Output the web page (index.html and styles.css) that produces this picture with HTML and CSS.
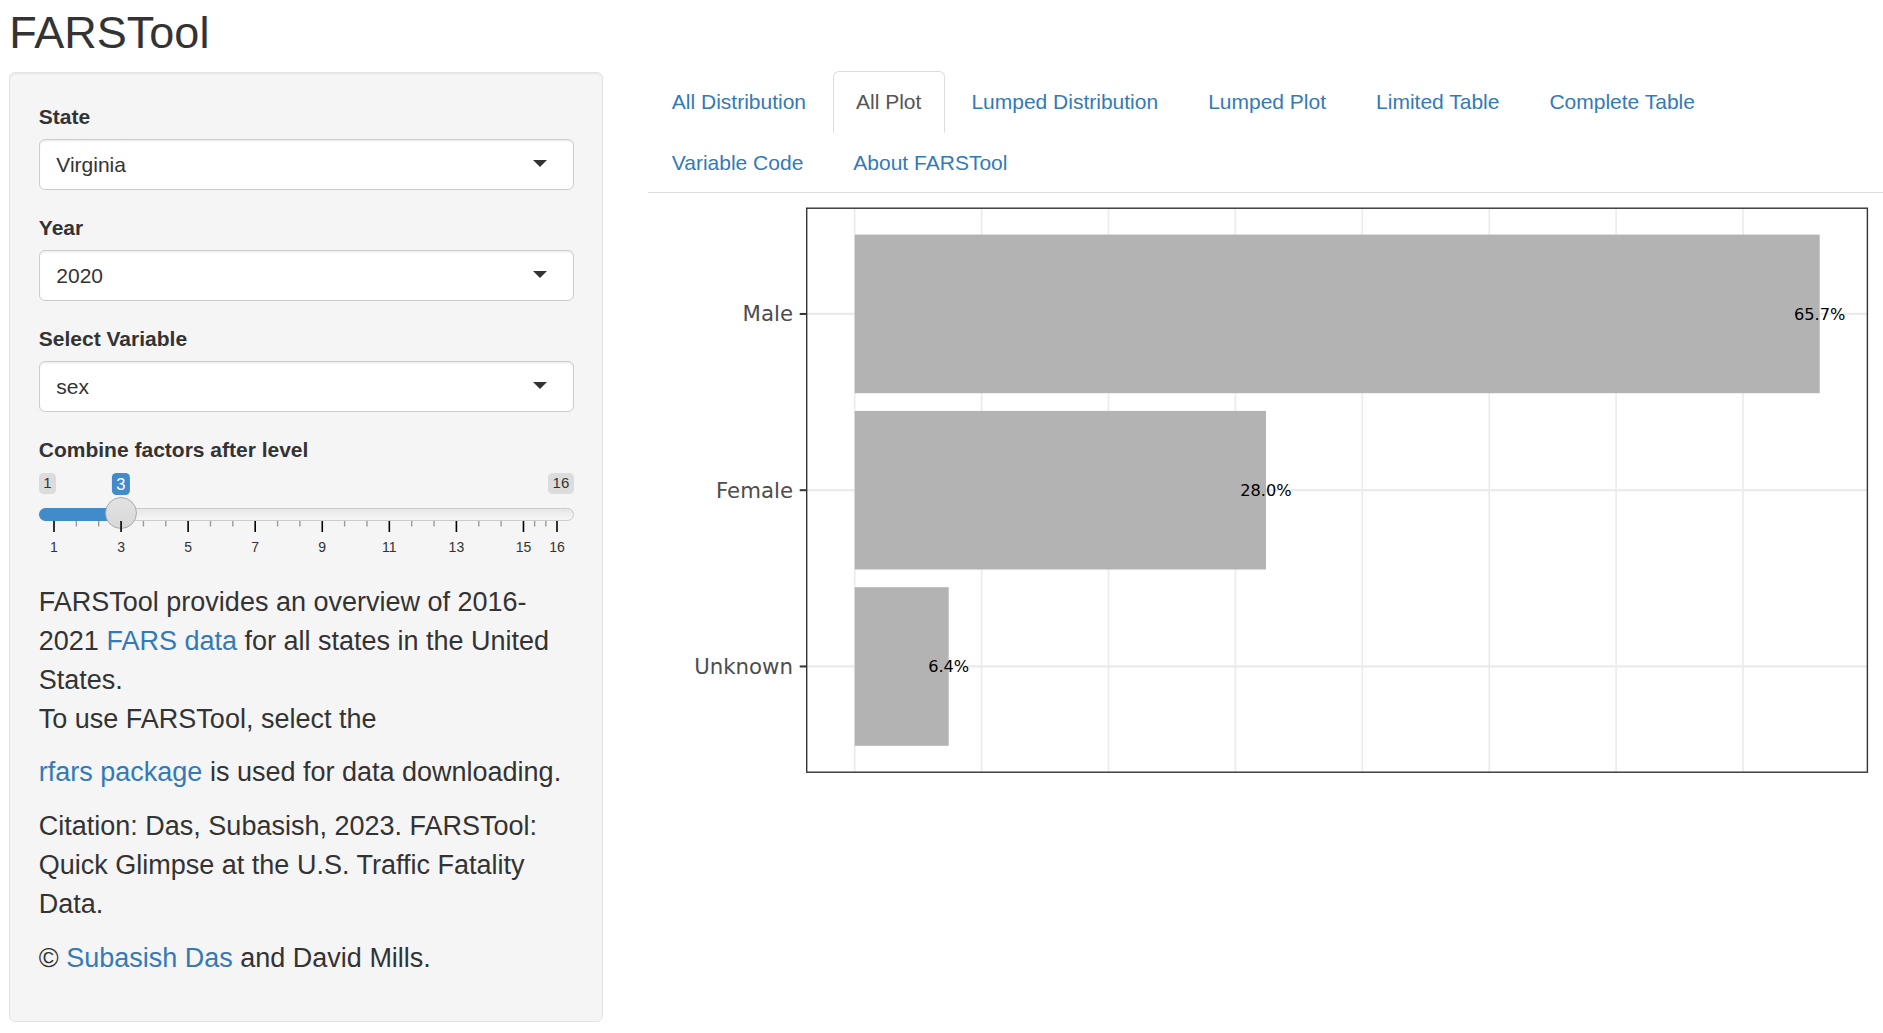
FILE: index.html
```html
<!DOCTYPE html>
<html lang="en">
<head>
<meta charset="utf-8">
<title>FARSTool</title>
<link rel="stylesheet" href="styles.css">
</head>
<body>
<div class="page">
  <h2 class="title">FARSTool</h2>
  <div class="row">
    <aside class="well">
      <div class="form-group">
        <label>State</label>
        <div class="select"><span>Virginia</span><i class="caret"></i></div>
      </div>
      <div class="form-group">
        <label>Year</label>
        <div class="select"><span>2020</span><i class="caret"></i></div>
      </div>
      <div class="form-group">
        <label>Select Variable</label>
        <div class="select"><span>sex</span><i class="caret"></i></div>
      </div>
      <div class="form-group">
        <label>Combine factors after level</label>
        <div class="irs">
          <span class="irs-min">1</span>
          <span class="irs-max">16</span>
          <span class="irs-line"></span>
          <span class="irs-bar"></span>
          <span class="irs-handle"></span>
          <span class="irs-from">3</span>
          <svg class="irs-grid" width="534" height="38" viewBox="0 0 534 38">
            <g class="pol">
              <line x1="15" y1="0" x2="15" y2="11"/>
              <line x1="82.07" y1="0" x2="82.07" y2="11"/>
              <line x1="149.13" y1="0" x2="149.13" y2="11"/>
              <line x1="216.2" y1="0" x2="216.2" y2="11"/>
              <line x1="283.27" y1="0" x2="283.27" y2="11"/>
              <line x1="350.33" y1="0" x2="350.33" y2="11"/>
              <line x1="417.4" y1="0" x2="417.4" y2="11"/>
              <line x1="484.47" y1="0" x2="484.47" y2="11"/>
              <line x1="518" y1="0" x2="518" y2="11"/>
            </g>
            <g class="pol-small">
              <line x1="37.36" y1="0" x2="37.36" y2="5.5"/>
              <line x1="59.71" y1="0" x2="59.71" y2="5.5"/>
              <line x1="104.42" y1="0" x2="104.42" y2="5.5"/>
              <line x1="126.78" y1="0" x2="126.78" y2="5.5"/>
              <line x1="171.49" y1="0" x2="171.49" y2="5.5"/>
              <line x1="193.84" y1="0" x2="193.84" y2="5.5"/>
              <line x1="238.56" y1="0" x2="238.56" y2="5.5"/>
              <line x1="260.91" y1="0" x2="260.91" y2="5.5"/>
              <line x1="305.62" y1="0" x2="305.62" y2="5.5"/>
              <line x1="327.98" y1="0" x2="327.98" y2="5.5"/>
              <line x1="372.69" y1="0" x2="372.69" y2="5.5"/>
              <line x1="395.04" y1="0" x2="395.04" y2="5.5"/>
              <line x1="439.76" y1="0" x2="439.76" y2="5.5"/>
              <line x1="462.11" y1="0" x2="462.11" y2="5.5"/>
              <line x1="495.64" y1="0" x2="495.64" y2="5.5"/>
              <line x1="506.82" y1="0" x2="506.82" y2="5.5"/>
            </g>
            <g class="grid-text">
              <text x="15" y="31">1</text>
              <text x="82.07" y="31">3</text>
              <text x="149.13" y="31">5</text>
              <text x="216.2" y="31">7</text>
              <text x="283.27" y="31">9</text>
              <text x="350.33" y="31">11</text>
              <text x="417.4" y="31">13</text>
              <text x="484.47" y="31">15</text>
              <text x="518" y="31">16</text>
            </g>
          </svg>
        </div>
      </div>
      <p>FARSTool provides an overview of 2016-2021 <a href="#">FARS data</a> for all states in the United States.<br>To use FARSTool, select the</p>
      <p><a href="#">rfars package</a> is used for data downloading.</p>
      <p>Citation: Das, Subasish, 2023. FARSTool: Quick Glimpse at the U.S. Traffic Fatality Data.</p>
      <p>© <a href="#">Subasish Das</a> and David Mills.</p>
    </aside>
    <main class="main">
      <ul class="nav-tabs">
        <li><a href="#">All Distribution</a></li>
        <li class="active"><a href="#">All Plot</a></li>
        <li><a href="#">Lumped Distribution</a></li>
        <li><a href="#">Lumped Plot</a></li>
        <li><a href="#">Limited Table</a></li>
        <li><a href="#">Complete Table</a></li>
        <li><a href="#">Variable Code</a></li>
        <li><a href="#">About FARSTool</a></li>
      </ul>
      <div class="tab-content">
        <svg class="plot" width="1234.7" height="600" viewBox="648.3 192.8 1234.7 600">
          <g class="grid-v">
            <line x1="855" y1="208" x2="855" y2="772"/>
            <line x1="981.9" y1="208" x2="981.9" y2="772"/>
            <line x1="1108.8" y1="208" x2="1108.8" y2="772"/>
            <line x1="1235.7" y1="208" x2="1235.7" y2="772"/>
            <line x1="1362.6" y1="208" x2="1362.6" y2="772"/>
            <line x1="1489.5" y1="208" x2="1489.5" y2="772"/>
            <line x1="1616.4" y1="208" x2="1616.4" y2="772"/>
            <line x1="1743.3" y1="208" x2="1743.3" y2="772"/>
          </g>
          <g class="grid-h">
            <line x1="807" y1="313.75" x2="1867.7" y2="313.75"/>
            <line x1="807" y1="490" x2="1867.7" y2="490"/>
            <line x1="807" y1="666.25" x2="1867.7" y2="666.25"/>
          </g>
          <g class="bars">
            <rect x="855" y="234.4" width="965" height="158.6"/>
            <rect x="855" y="410.7" width="411.3" height="158.6"/>
            <rect x="855" y="587" width="94" height="158.6"/>
          </g>
          <g class="bar-labels">
            <text x="1820" y="314">65.7%</text>
            <text x="1266.3" y="490">28.0%</text>
            <text x="949" y="666.25">6.4%</text>
          </g>
          <rect class="panel" x="807" y="208" width="1060.7" height="564"/>
          <g class="ticks">
            <line x1="800" y1="313.75" x2="807" y2="313.75"/>
            <line x1="800" y1="490" x2="807" y2="490"/>
            <line x1="800" y1="666.25" x2="807" y2="666.25"/>
          </g>
          <g class="axis-text">
            <text x="793.3" y="313.75">Male</text>
            <text x="793.3" y="490">Female</text>
            <text x="793.3" y="666.25">Unknown</text>
          </g>
        </svg>
      </div>
    </main>
  </div>
</div>
</body>
</html>
```

FILE: styles.css
```css
* {
  box-sizing: border-box;
}

html,
body {
  margin: 0;
  background: #fff;
}

body {
  font-family: "Liberation Sans", Arial, Helvetica, sans-serif;
  font-size: 21px;
  line-height: 1.42857;
  color: #333;
  overflow: hidden;
}

a {
  color: #337ab7;
  text-decoration: none;
}

.page {
  padding: 7.5px 0 0 9.3px;
}

.title {
  margin: 0 0 15.3px;
  font-size: 45px;
  font-weight: 500;
  line-height: 1.1;
  color: #333;
}

.row {
  display: flex;
  align-items: flex-start;
  gap: 45px;
}

/* ---------- sidebar ---------- */
.well {
  flex: none;
  width: 594px;
  padding: 28.5px;
  background: #f5f5f5;
  border: 1.5px solid #e3e3e3;
  border-radius: 6px;
  box-shadow: inset 0 1.5px 1.5px rgba(0, 0, 0, 0.05);
}

.form-group {
  margin-bottom: 22.5px;
}

.form-group > label {
  display: block;
  margin-bottom: 8.5px;
  font-weight: bold;
  line-height: 29px;
}

.select {
  position: relative;
  display: flex;
  align-items: center;
  height: 51px;
  padding: 0 50px 0 16.5px;
  background: #fff;
  border: 1.5px solid #ccc;
  border-radius: 6px;
  box-shadow: inset 0 1.5px 1.5px rgba(0, 0, 0, 0.075);
  color: #333;
}

.caret {
  position: absolute;
  right: 25.5px;
  top: 50%;
  margin-top: -4.5px;
  width: 0;
  height: 0;
  border-style: solid;
  border-width: 7.5px 7.5px 0;
  border-color: #333 transparent transparent;
}

/* slider (ion.rangeSlider, shiny skin) */
.irs {
  position: relative;
  height: 88.5px;
}

.irs-min,
.irs-max,
.irs-from {
  position: absolute;
  top: 0.5px;
  padding: 1.5px 4.5px;
  font-size: 15px;
  line-height: 18px;
  border-radius: 4.5px;
}

.irs-min,
.irs-max {
  background: #dcdcdc;
  color: #333;
}

.irs-min {
  left: 0;
}

.irs-max {
  right: 0;
}

.irs-from {
  left: 82px;
  transform: translateX(-50%);
  padding: 2px 4.5px;
  font-size: 16.5px;
  line-height: 18.5px;
  background: #428bca;
  color: #fff;
}

.irs-line {
  position: absolute;
  left: 0;
  right: 0;
  top: 36px;
  height: 12.5px;
  border: 1.5px solid #ccc;
  border-radius: 12px;
  background: linear-gradient(to bottom, #dedede -50%, #fff 150%);
}

.irs-bar {
  position: absolute;
  left: 0;
  top: 36px;
  width: 82px;
  height: 12.5px;
  border-radius: 7px 0 0 7px;
  background: #428bca;
}

.irs-handle {
  position: absolute;
  left: 66px;
  top: 25px;
  width: 32px;
  height: 32px;
  border: 1.5px solid #ababab;
  border-radius: 50%;
  background: linear-gradient(to bottom, #e2e2e2 0%, #d8d8d8 100%);
}

.irs-grid {
  position: absolute;
  left: 0;
  top: 48.5px;
  display: block;
  overflow: visible;
}

.irs-grid .pol line {
  stroke: #000;
  stroke-width: 1.6;
}

.irs-grid .pol-small line {
  stroke: #9a9a9a;
  stroke-width: 1.4;
}

.irs-grid .grid-text text {
  font-family: "Liberation Sans", Arial, sans-serif;
  font-size: 14px;
  fill: #333;
  text-anchor: middle;
}

.well p {
  margin: 0 0 15px;
  font-size: 27px;
  line-height: 38.8px;
}

/* ---------- main ---------- */
.main {
  flex: 1;
  min-width: 0;
  margin-top: -1px;
}

.nav-tabs {
  display: flex;
  flex-wrap: wrap;
  margin: 0;
  padding: 0;
  list-style: none;
  border-bottom: 1.5px solid #ddd;
}

.nav-tabs li {
  margin-bottom: -1.5px;
}

.nav-tabs a {
  display: block;
  margin-right: 3px;
  padding: 15px 22.5px;
  line-height: 30px;
  border: 1.5px solid transparent;
  border-radius: 6px 6px 0 0;
  color: #337ab7;
}

.nav-tabs li.active a {
  color: #555;
  background: #fff;
  border-color: #ddd #ddd transparent;
}

.plot {
  display: block;
}

.plot .grid-v line {
  stroke: #ebebeb;
  stroke-width: 1.6;
}

.plot .grid-h line {
  stroke: #ebebeb;
  stroke-width: 2.2;
}

.plot .bars rect {
  fill: #b3b3b3;
}

.plot .panel {
  fill: none;
  stroke: #333;
  stroke-width: 1.4;
}

.plot .ticks line {
  stroke: #333;
  stroke-width: 2;
}

.plot .axis-text text {
  font-family: "DejaVu Sans", sans-serif;
  font-size: 21.3px;
  fill: #4d4d4d;
  text-anchor: end;
  dominant-baseline: central;
}

.plot .bar-labels text {
  font-family: "DejaVu Sans", sans-serif;
  font-size: 16.2px;
  fill: #000;
  text-anchor: middle;
  dominant-baseline: central;
}
```
